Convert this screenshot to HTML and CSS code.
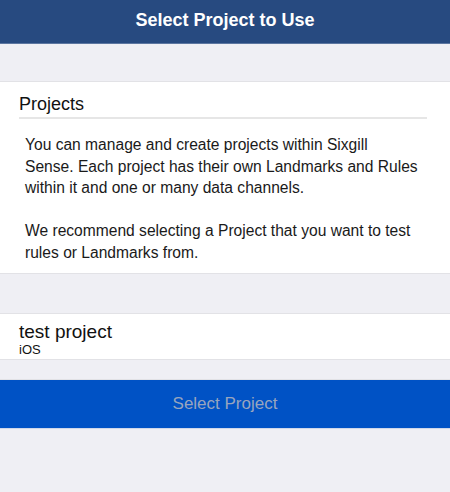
FILE: index.html
```html
<!DOCTYPE html>
<html>
<head>
<meta charset="utf-8">
<link rel="stylesheet" href="styles.css">
</head>
<body>
<div class="app">
  <header class="navbar">Select Project to Use</header>
  <div class="spacer top"></div>
  <section class="info">
    <h2 class="info-title">Projects</h2>
    <p class="info-text">You can manage and create projects within Sixgill<br>Sense. Each project has their own Landmarks and Rules within it and one or many data channels.</p>
    <p class="info-text">We recommend selecting a Project that you want to test rules or Landmarks from.</p>
  </section>
  <div class="spacer mid"></div>
  <div class="project-row">
    <div class="project-name">test project</div>
    <div class="project-platform">iOS</div>
  </div>
  <div class="spacer small"></div>
  <button class="select-btn">Select Project</button>
</div>
</body>
</html>
```

FILE: styles.css
```css
html, body {
  margin: 0;
  padding: 0;
  background: #efeff4;
  font-family: "Liberation Sans", Arial, sans-serif;
  color: #111;
}
.app {
  width: 450px;
  min-height: 492px;
  display: flex;
  flex-direction: column;
}
.navbar {
  height: 44px;
  box-sizing: border-box;
  background: #274a80;
  border-bottom: 1px solid #5c76a0;
  color: #fff;
  font-size: 18px;
  font-weight: bold;
  display: flex;
  align-items: center;
  justify-content: center;
  padding-bottom: 2px;
}
.spacer.top { height: 37px; border-bottom: 1px solid #e2e2e6; }
.spacer.mid { height: 39px; border-top: 1px solid #e2e2e6; border-bottom: 1px solid #e2e2e6; }
.spacer.small { height: 19px; border-top: 1px solid #e2e2e6; border-bottom: 1px solid #e2e2e6; }
.info {
  background: #fff;
  padding: 11px 23px 22px 19px;
  height: 191px;
  box-sizing: border-box;
}
.info-title {
  margin: 0;
  font-size: 18px;
  font-weight: normal;
  line-height: 22px;
  padding-bottom: 2px;
  border-bottom: 2px solid #e6e6e6;
}
.info-text {
  margin: 0 -12px 0 0;
  padding-left: 6px;
  font-size: 15.6px;
  line-height: 21.5px;
  color: #1a1a1a;
}
.info-title + .info-text { margin-top: 15px; }
.info-text + .info-text { margin-top: 21.5px; }
.project-row {
  background: #fff;
  height: 45px;
  padding: 7px 19px 0;
  box-sizing: border-box;
}
.project-name {
  font-size: 19px;
  line-height: 21px;
  color: #111;
}
.project-platform {
  font-size: 13px;
  line-height: 15px;
  color: #111;
}
.select-btn {
  display: block;
  width: 450px;
  height: 49px;
  border: none;
  background: #0052c5;
  color: #98a5be;
  font-family: "Liberation Sans", Arial, sans-serif;
  font-size: 17px;
  padding: 0;
  border-bottom: 1px solid #cfd8ea;
}
```
